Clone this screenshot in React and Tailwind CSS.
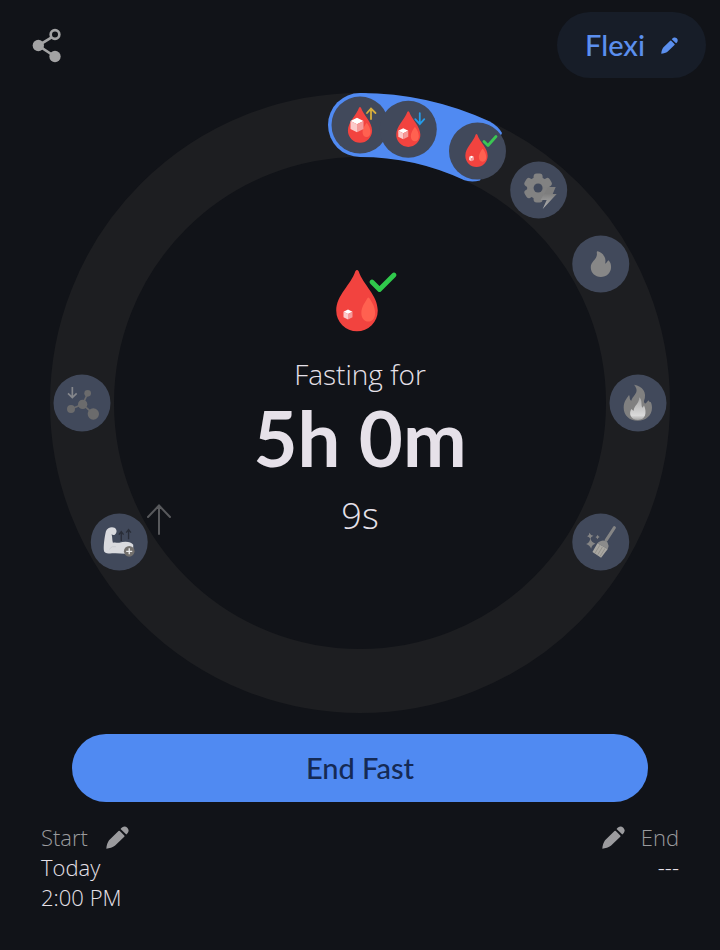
import { useId } from 'react';

const RADIUS = 278;
const HOURS_ON_DIAL = 72;

function pointAt(hour, radius = RADIUS) {
  const angle = (hour / HOURS_ON_DIAL) * Math.PI * 2;
  return { x: Math.sin(angle) * radius, y: -Math.cos(angle) * radius };
}

function PencilIcon({ className }) {
  return (
    <svg viewBox="0 0 68 68" className={className} fill="currentColor" aria-hidden="true">
      <path d="M1 67C1 58 5 48 9 42L37 15Q39 13 41 15L54 28Q56 30 54 32L27 58C20 63 10 67 1 67Z" />
      <path d="M43 9C48 1 57 -1 63 5C69 11 68 19 60 25Z" />
    </svg>
  );
}

function ShareIcon() {
  return (
    <svg viewBox="36 42 90 104" className="h-[35px] w-[30px]" aria-hidden="true">
      <path d="M96 69L55 94L100 124" fill="none" stroke="#a3a3a4" strokeWidth="8" />
      <circle cx="105" cy="61" r="13" fill="#111318" stroke="#a3a3a4" strokeWidth="8" />
      <circle cx="55" cy="94" r="17" fill="#a3a3a4" />
      <circle cx="105" cy="127" r="17" fill="#a3a3a4" />
    </svg>
  );
}

function Cube({ x, y, size }) {
  return (
    <g transform={`translate(${x} ${y}) scale(${size / 20})`}>
      <path d="M0 -11L10 -6L0 -1L-10 -6Z" fill="#ffffff" />
      <path d="M-10 -6L0 -1V11L-10 6Z" fill="#fbcaca" />
      <path d="M10 -6L0 -1V11L10 6Z" fill="#f59a99" />
    </g>
  );
}

// Tip of the drop sits at x, y
function Drop({ x, y, scale }) {
  return (
    <g transform={`translate(${x} ${y}) scale(${scale})`}>
      <path
        d="M-5 4Q0 -4 5 4C18 44 62 76 62 121A62 62 0 0 1 -62 121C-62 76 -18 44 -5 4Z"
        fill="#f2433f"
      />
      <path d="M31 84Q34 80 37 84C46 98 54 110 54 128C54 144 46 154 34 154C22 154 13 144 13 128C13 110 23 98 31 84Z" fill="#ff6150" />
    </g>
  );
}

function BloodSugarRises() {
  return (
    <>
      <Drop x={0} y={-18} scale={0.195} />
      <Cube x={-3} y={0} size={13} />
      <path d="M11 -6V-16M7 -12L11 -16.5L15.5 -12" fill="none" stroke="#d6ad3c" strokeWidth="1.8" strokeLinecap="round" />
    </>
  );
}

function BloodSugarDrops() {
  return (
    <>
      <Drop x={0} y={-18} scale={0.195} />
      <Cube x={-5} y={4.5} size={10} />
      <path d="M11.5 -16V-5.5M7 -10L11.5 -5L16 -10" fill="none" stroke="#259be8" strokeWidth="1.8" strokeLinecap="round" />
    </>
  );
}

function BloodSugarNormal() {
  return (
    <>
      <Drop x={-1} y={-17} scale={0.18} />
      <Cube x={-6} y={7.5} size={5} />
      <path d="M6.5 -9.5L10.5 -5.5L18.5 -14.5" fill="none" stroke="#3bc653" strokeWidth="2.8" strokeLinecap="round" strokeLinejoin="round" />
    </>
  );
}

function Metabolism() {
  const id = useId();
  return (
    <>
      <defs>
        <linearGradient id={id} x1="0" y1="0" x2="0" y2="1">
          <stop offset="0.3" stopColor="#7e7e7e" />
          <stop offset="1" stopColor="#b5b5b5" />
        </linearGradient>
      </defs>
      <g transform="translate(-0.6 -2)" fill="#828282">
        <circle r="11" />
        {[0, 60, 120, 180, 240, 300].map((turn) => (
          <rect key={turn} x="-4.5" y="-14.5" width="9" height="10" rx="3" transform={`rotate(${turn})`} />
        ))}
        <circle r="4.5" fill="#41495b" />
      </g>
      <path d="M9 -3H17L14 4H18L4 19L8 10H2Z" fill={`url(#${id})`} />
    </>
  );
}

function SmallFlame() {
  return (
    <path
      transform="scale(0.333)"
      d="M-9 -38C6 -33 18 -20 13 -1C18 -3 20 -8 23 -11C29 -6 31 2 31 9C31 27 17 39 0 39C-17 39 -30 27 -30 10C-30 -10 -8 -14 -12 -34Q-12 -39 -9 -38Z"
      fill="#878787"
    />
  );
}

function BigFlame() {
  const id = useId();
  return (
    <g transform="scale(0.333)">
      <defs>
        <linearGradient id={id} x1="0" y1="0" x2="0" y2="1">
          <stop offset="0" stopColor="#a9a9a9" />
          <stop offset="0.8" stopColor="#dadada" />
          <stop offset="1" stopColor="#a5a5a5" />
        </linearGradient>
      </defs>
      <path
        d="M-12 -55C14 -51 28 -32 18 -6C18 4 24 4 31 -8C33 -6 33 -2 38 -3C41 2 42 8 42 14C42 37 24 53 -1 53C-26 53 -43 37 -43 14C-43 -4 -35 -12 -27 -24C-23 -18 -27 -10 -20 -7C-14 -26 7 -32 -12 -55Z"
        fill="#808080"
      />
      <path
        d="M4 -17C14 -8 8 6 13 14C16 12 17 10 18 7C28 30 22 51 0 51C-21 51 -29 33 -20 18C-17 20 -16 23 -13 23C-12 8 4 2 4 -17Z"
        fill={`url(#${id})`}
      />
    </g>
  );
}

function Autophagy() {
  return (
    <g transform="scale(0.333)">
      <path d="M41 -43L16 -5" stroke="#858585" strokeWidth="9" strokeLinecap="round" />
      <path d="M-6 0Q8 -10 20 1Q26 11 21 21L-10 4Z" fill="#8b8b8b" />
      <path d="M-10 4L21 21L1 47L-25 30Z" fill="#a9a7a2" />
      <path d="M-3 10L-17 33M5 15L-9 38M13 19L-2 43" stroke="#85837f" strokeWidth="2" />
      <g fill="#858585">
        <path d="M-31 -11Q-28 2 -16 5Q-27 8 -29 20Q-33 9 -44 6Q-33 3 -31 -11Z" />
        <path d="M-34 -28Q-31 -20 -22 -19Q-30 -16 -31 -9Q-34 -15 -41 -17Q-34 -20 -34 -28Z" />
        <path d="M-9 -22Q-8 -17 -3 -15Q-8 -14 -10 -8Q-11 -13 -16 -15Q-11 -17 -9 -22Z" />
      </g>
    </g>
  );
}

function GrowthHormone() {
  return (
    <g transform="scale(0.333)">
      <path
        d="M-40 -32C-35 -46 -14 -48 -9 -37C-6 -29 -11 -24 -15 -21Q-20 -20 -23 -23C-20 -14 -22 -6 -19 2C-11 0 -6 3 0 2C16 -3 36 -2 42 8L42 32C18 38 2 33 -16 34C-26 34 -38 36 -45 29C-49 20 -44 -16 -40 -32Z"
        fill="#d9dade"
      />
      <path d="M-30 22Q-22 10 -10 14" fill="none" stroke="#c3c5ca" strokeWidth="2" />
      <path d="M6 -3V-30M-1 -22L6 -31L13 -22M28 -8V-36M21 -28L28 -37L35 -28" fill="none" stroke="#292d38" strokeWidth="4" />
      <circle cx="30" cy="28" r="16" fill="#73706d" />
      <path d="M30 19V37M21 28H39" stroke="#ececec" strokeWidth="4" />
    </g>
  );
}

function InsulinSensitivity() {
  return (
    <g transform="scale(0.333)">
      <path d="M17 -29L2 4L-33 18M2 4L34 33" fill="none" stroke="#6b6b6c" strokeWidth="5" />
      <g fill="#6b6b6c">
        <circle cx="17" cy="-29" r="10" />
        <circle cx="2" cy="4" r="14" />
        <circle cx="-33" cy="18" r="12" />
        <circle cx="34" cy="33" r="17" />
      </g>
      <path d="M-29 -48V-17M-42 -29L-29 -16L-16 -29" fill="none" stroke="#85878c" strokeWidth="5" />
    </g>
  );
}

const stages = [
  { hour: 0, Icon: BloodSugarRises },
  { hour: 2, Icon: BloodSugarDrops },
  { hour: 5, Icon: BloodSugarNormal },
  { hour: 8, Icon: Metabolism },
  { hour: 12, Icon: SmallFlame },
  { hour: 18, Icon: BigFlame },
  { hour: 24, Icon: Autophagy },
  { hour: 48, Icon: GrowthHormone },
  { hour: 54, Icon: InsulinSensitivity },
];

function Dial() {
  const start = pointAt(0);
  const end = pointAt(5);

  return (
    <svg viewBox="-310 -310 620 620" className="w-full [grid-area:1/1]" aria-hidden="true">
      <circle r={RADIUS} fill="none" stroke="#1d1e21" strokeWidth="64" />
      <circle cx={start.x} cy={start.y} r="32" fill="#508af2" />
      <path
        d={`M${start.x} ${start.y}A${RADIUS} ${RADIUS} 0 0 1 ${end.x} ${end.y}`}
        fill="none"
        stroke="#508af2"
        strokeWidth="64"
      />
      {/* soft end of the progress arc, mostly hidden by the stage badge */}
      <path d="M130.5 -281Q138 -277 142 -270L120 -222.5Q111 -220.5 103.5 -223Z" fill="#508af2" />
      {stages.map(({ hour, Icon }) => {
        const { x, y } = pointAt(hour);
        return (
          <g key={hour} transform={`translate(${x} ${y})`}>
            <circle r="28.5" fill="#41495b" />
            <Icon />
          </g>
        );
      })}
      <path d="M-201 131V103M-212 114L-201 102.5L-190 114" fill="none" stroke="#58595c" strokeWidth="2" strokeLinecap="round" />
    </svg>
  );
}

export default function App() {
  return (
    <div className="min-h-screen bg-[#111318] font-['Open_Sans','Noto_Sans',sans-serif] font-light text-[#e6e1e9]">
      <header className="flex items-center justify-between pt-3 pr-[14px] pl-8">
        <button type="button" aria-label="Share">
          <ShareIcon />
        </button>
        <button
          type="button"
          className="flex h-[66px] items-center gap-4 rounded-full bg-[#171d28] px-7 font-['Lato',sans-serif] text-[29px] font-medium text-[#5b8fee]"
        >
          Flexi
          <PencilIcon className="size-[17px]" />
        </button>
      </header>

      <main className="px-[50px] pt-[15px]">
        <div className="grid">
          <Dial />
          <div className="flex flex-col items-center justify-center [grid-area:1/1]">
            <svg viewBox="-38 0 76 62" className="h-[62px] w-[76px]" aria-hidden="true">
              <Drop x={-3} y={0} scale={0.335} />
              <Cube x={-12} y={44.5} size={9} />
              <path d="M12 12L19.5 19.5L34 5" fill="none" stroke="#30c94c" strokeWidth="4.8" strokeLinecap="round" strokeLinejoin="round" />
            </svg>
            <p className="mt-6 text-[28px] leading-9">Fasting for</p>
            <p className="font-['Lato',sans-serif] text-[76px] leading-[92px] font-bold">5h 0m</p>
            <p className="mt-3 text-[36px] leading-10">9s</p>
          </div>
        </div>

        <div className="px-[22px] pt-[21px]">
          <button
            type="button"
            className="h-[68px] w-full rounded-full bg-[#508af2] font-['Lato',sans-serif] text-[29px] font-medium text-[#152a55]"
          >
            End Fast
          </button>
        </div>
      </main>

      <footer className="flex justify-between px-[41px] pt-5 pb-8 text-[22px] leading-[30px]">
        <div>
          <div className="flex items-center gap-[18px] text-[#9b9b9e]">
            Start
            <button type="button" aria-label="Edit start">
              <PencilIcon className="size-[23px]" />
            </button>
          </div>
          <p>Today</p>
          <p>2:00 PM</p>
        </div>
        <div className="text-right">
          <div className="flex items-center gap-4 text-[#9b9b9e]">
            <button type="button" aria-label="Edit end">
              <PencilIcon className="size-[23px]" />
            </button>
            End
          </div>
          <p>---</p>
        </div>
      </footer>
    </div>
  );
}
